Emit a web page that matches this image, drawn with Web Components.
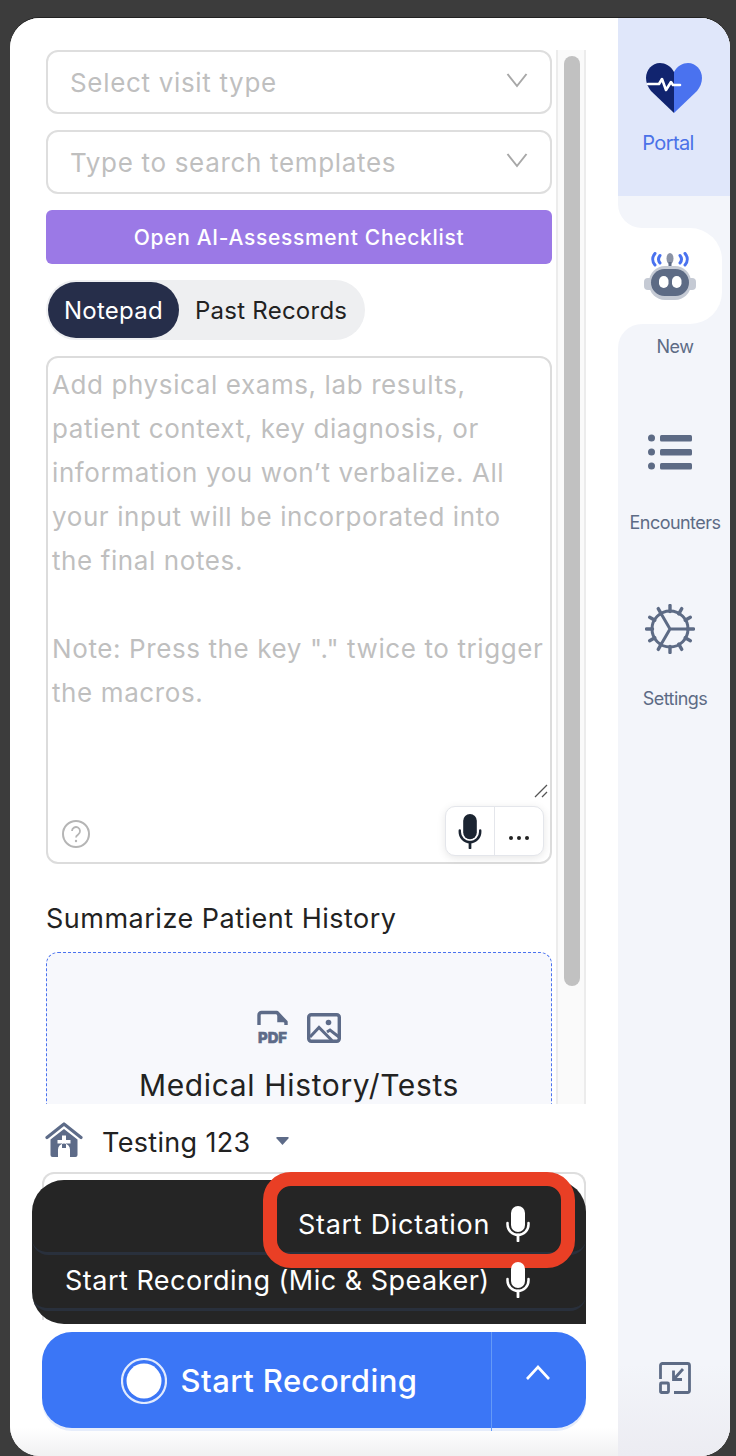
<!doctype html>
<html><head><meta charset="utf-8"><style>
html,body{margin:0;padding:0;background:#3c3c3c;height:100%;overflow:hidden}
body{font-family:Inter,"Liberation Sans",sans-serif}
</style></head><body>
<app-window>
  <main-column></main-column>
  <side-nav slot="side"></side-nav>
</app-window>
<script>
const MIC=(c,w,h)=>`<svg width="${w}" height="${h}" viewBox="0 0 24 36" fill="none"><rect x="5" y="0" width="14" height="26" rx="7" fill="${c}"/><path d="M1.500 17v1.500a10.500 10.500 0 0 0 21 0V17" stroke="${c}" stroke-width="2.500" stroke-linecap="round"/><path d="M12 29v6" stroke="${c}" stroke-width="2.800" stroke-linecap="round"/></svg>`;
const TEETH=Array.from({length:12},(_,i)=>`<path d="M25 1.500v6" transform="rotate(${i*30} 25 25)"/>`).join('');
function def(name,css,html){
  customElements.define(name,class extends HTMLElement{
    constructor(){super();const s=this.attachShadow({mode:'open'});
      const h=typeof html==='function'?html(this):html;
      s.innerHTML=`<style>${css}</style>${h}`;}
  });
}
def('app-window',`
:host{display:flex;position:absolute;left:10px;top:18px;width:720px;height:1438px;background:#fff;border-radius:30px;overflow:hidden;box-sizing:border-box;box-shadow:0 -1px 0 #222}
.m{width:608px;flex:none;display:flex}.s{width:112px;flex:none;display:flex}
::slotted(*){flex:1}
`,`<div class="m"><slot></slot></div><div class="s"><slot name="side"></slot></div>`);

def('main-column',`
:host{display:flex;flex-direction:column;background:linear-gradient(#fff 0,#fff 1410px,#f1f1f2 1438px)}
.top{height:1086px;display:flex;overflow:hidden;flex:none}
.content{width:506px;margin-left:36px;padding-top:32px;display:flex;flex-direction:column;gap:16px;flex:none}
.content>*{flex:none}
x-scrollbar{margin-left:4px;margin-top:32px}
`,`<div class="top"><div class="content">
<x-select label="Select visit type"></x-select>
<x-select label="Type to search templates"></x-select>
<x-cta>Open AI-Assessment Checklist</x-cta>
<x-tabs></x-tabs>
<x-notepad></x-notepad>
<x-upload></x-upload>
</div><x-scrollbar></x-scrollbar></div>
<x-recorder></x-recorder>`);

def('x-scrollbar',`
:host{display:block;width:30px;height:1054px;box-sizing:border-box;background:#fafafa;border-left:2px solid #ececec;border-right:2px solid #ececec;padding:6px 6px 0;flex:none}
div{width:16px;height:930px;background:#c1c1c1;border-radius:8px}
`,`<div></div>`);

def('x-select',`
:host{display:flex;align-items:center;justify-content:space-between;height:64px;box-sizing:border-box;border:2px solid #dedede;border-radius:12px;padding:0 22px 0 22px;color:#bfbfbf;font-size:26px;letter-spacing:.67px}
svg{flex:none;margin-top:-4px}
`,e=>`<span>${e.getAttribute('label')}</span><svg width="22" height="16" viewBox="0 0 22 16" fill="none"><path d="M1.5 2 11 14 20.5 2" stroke="#a8a8a8" stroke-width="2"/></svg>`);

def('x-cta',`
:host{display:flex;align-items:center;justify-content:center;height:54px;background:#9b79e6;border-radius:6px;color:#fff;font-size:21px;font-weight:500;letter-spacing:.69px}
`,`<slot></slot>`);

def('x-tabs',`
:host{display:flex;align-self:flex-start;height:60px;width:319px;box-sizing:border-box;padding:2px;background:#eeeff1;border-radius:30px;font-size:24px;letter-spacing:.25px;align-items:stretch}
.a{width:131px;background:#262e4a;color:#fff;border-radius:28px;display:flex;align-items:center;justify-content:center}
.b{display:flex;align-items:center;padding-left:16px;color:#222}
`,`<div class="a">Notepad</div><div class="b">Past Records</div>`);

def('x-notepad',`
:host{display:block;position:relative;height:508px;box-sizing:border-box;border:2px solid #dcdcdc;border-radius:12px;color:#bfbfbf;font-size:26px;line-height:44px;letter-spacing:.6px;padding:5px 0 0 4px;white-space:nowrap}
.grip{position:absolute;right:2px;bottom:64px}
.help{position:absolute;left:14px;bottom:14px}
.tools{position:absolute;right:6px;bottom:6px;width:99px;height:50px;box-sizing:border-box;background:#fff;border:1px solid #e4e6eb;border-radius:10px;box-shadow:0 2px 8px rgba(0,0,0,.1);display:flex}
.tools div{width:48px;display:flex;align-items:center;justify-content:center}
.tools div+div{border-left:1px solid #e4e6eb;width:49px}
`,`Add physical exams, lab results,<br>patient context, key diagnosis, or<br>information you won’t verbalize. All<br>your input will be incorporated into<br>the final notes.<br><br>Note: Press the key "." twice to trigger<br>the macros.
<svg class="grip" width="14" height="14" viewBox="0 0 14 14" fill="none"><path d="M1 13 13 1M8 13l5-5" stroke="#555" stroke-width="1.300"/></svg>
<svg class="help" width="28" height="28" viewBox="0 0 28 28" fill="none"><circle cx="14" cy="14" r="13" stroke="#b5b5b5" stroke-width="2"/><path d="M10 11a4 4 0 1 1 6.2 3.4c-1.4.9-2.2 1.6-2.2 3.2" stroke="#b5b5b5" stroke-width="1.8"/><circle cx="14" cy="21" r="1.2" fill="#b5b5b5"/></svg>
<div class="tools"><div>${MIC('#1b2431',24,35)}</div><div><svg width="22" height="6" viewBox="0 0 22 6" style="margin-top:14px"><circle cx="3" cy="3" r="2" fill="#222"/><circle cx="11" cy="3" r="2" fill="#222"/><circle cx="19" cy="3" r="2" fill="#222"/></svg></div></div>`);

def('x-upload',`
:host{display:block;padding-top:23px}
h3{margin:0 0 17px;font-weight:400;font-size:27px;line-height:32px;letter-spacing:.5px;color:#222}
.box{height:300px;box-sizing:border-box;border:1px dashed #4a72ef;border-radius:12px;background:#f7f8fc;display:flex;flex-direction:column;align-items:center;padding-top:58px}
.ic{display:flex;gap:18px;align-items:flex-start;height:34px}
.t{font-size:30px;line-height:40px;margin-top:20px;color:#222;letter-spacing:.65px}
text{font-family:Inter,"Liberation Sans",sans-serif;font-weight:800}
svg{overflow:visible}
`,`<h3>Summarize Patient History</h3><div class="box"><div class="ic">
<svg width="32" height="33" viewBox="0 0 32 33" fill="none"><path d="M2 14V4a2.5 2.500 0 0 1 2.500-2.500H20L29 11v3" stroke="#5d6b88" stroke-width="3.400" stroke-linejoin="round"/><path d="M21 4v6.500h6z" fill="#5d6b88" stroke="#5d6b88" stroke-width="1.500"/><text x="15.500" y="32" text-anchor="middle" font-size="15" fill="#5d6b88" stroke="#5d6b88" stroke-width=".7" textLength="29" lengthAdjust="spacingAndGlyphs">PDF</text></svg>
<svg width="34" height="30" viewBox="0 0 34 30" fill="none" style="margin-top:2px"><rect x="1.700" y="1.700" width="30.600" height="26.600" rx="2.500" stroke="#5d6b88" stroke-width="3.400"/><circle cx="21.500" cy="9.500" r="2.800" fill="#5d6b88"/><path d="M3 24 12 14.500l13 13M20 19l3-2 9 7" stroke="#5d6b88" stroke-width="3"/></svg>
</div><div class="t">Medical History/Tests</div></div>`);

def('x-recorder',`
:host{display:block;flex:1;padding:16px 32px 0;position:relative}
.row{display:flex;align-items:center;height:40px;padding-left:3px;color:#222;font-size:27px;letter-spacing:.33px}
.row span{margin-left:19px;position:relative;top:2px}
.caret{margin-left:25px;margin-top:2px}
.card{position:relative;height:148px;margin-top:12px;border:2px solid #dedede;border-bottom:0;border-radius:12px 12px 0 0;box-sizing:border-box}
x-menu{position:absolute;left:-12px;top:6px}
x-bigbutton{margin-top:12px}
`,`<div class="row"><svg width="38" height="36" viewBox="0 0 38 36"><path d="M2 15.500 19 2l17 13.500" fill="none" stroke="#5d6b88" stroke-width="3.200" stroke-linecap="round" stroke-linejoin="round"/><path fill-rule="evenodd" d="M19 7 5.500 17.500V33a2 2 0 0 0 2 2h5.500v-7.500a6 6 0 0 1 12 0V35h5.500a2 2 0 0 0 2-2V17.500z M17 13.500V18h-4.500v3.500H17V26h4v-4.500h4.500V18H21v-4.500z" fill="#5d6b88"/></svg><span>Testing 123</span><svg class="caret" width="13" height="8" viewBox="0 0 13 8"><path d="M1 0h11a.8.8 0 0 1 .6 1.300L6.500 8 .4 1.300A.8.8 0 0 1 1 0z" fill="#5d6b88"/></svg></div>
<div class="card"><x-menu></x-menu></div><x-bigbutton></x-bigbutton>`);

def('x-menu',`
:host{display:block;position:absolute;width:554px;height:144px;background:#252525;border-radius:32px 32px 0 32px;color:#fff;font-size:27px}
.clip{position:absolute;inset:0;overflow:hidden;border-radius:32px 32px 0 32px}
.line{position:absolute;left:0;right:0;height:75px;box-sizing:border-box;border-bottom:3px solid #29303c;border-radius:0 0 16px 16px}
.mic{position:absolute;left:474px}
.hl{position:absolute;left:231px;top:-8px;width:312px;height:96px;box-sizing:border-box;border:14px solid #e93f25;border-radius:28px}
.t{position:absolute;white-space:nowrap;line-height:36px}
`,`<div class="clip"><div class="line" style="top:0"></div><div class="line" style="top:56px"></div></div>
<div class="hl"></div>
<div class="t" style="left:266px;top:27px;letter-spacing:.7px">Start Dictation</div>
<div class="mic" style="top:26px">${MIC('#fff',24,36)}</div>
<div class="t" style="left:33px;top:83px;letter-spacing:.49px">Start Recording (Mic &amp; Speaker)</div>
<div class="mic" style="top:82px">${MIC('#fff',24,36)}</div>`);

def('x-bigbutton',`
:host{display:flex;height:96px;background:#3b76f6;border-radius:30px;color:#fff;box-shadow:0 3px 0 #e6edfb;position:relative}
.l{width:449px;display:flex;align-items:center;justify-content:center;gap:14px;font-size:31px;font-weight:500;letter-spacing:.43px;padding:1px 0 0 5px;box-sizing:border-box}
.d{position:absolute;left:449px;top:0;bottom:-3px;width:1px;background:#659af7}
.c{flex:1;display:flex;justify-content:center;padding:33px 2px 0 0}
.dot{width:46px;height:46px;flex:none;filter:blur(.5px)}
`,`<div class="l"><svg class="dot" viewBox="0 0 46 46"><circle cx="23" cy="23" r="22" fill="none" stroke="#fff" stroke-width="2.200" opacity=".85"/><circle cx="23" cy="23" r="17.500" fill="#fff"/></svg><span>Start Recording</span></div><div class="d"></div>
<div class="c"><svg width="26" height="16" viewBox="0 0 26 16" fill="none"><path d="M2 14 13 2l11 12" stroke="#fff" stroke-width="2.600"/></svg></div>`);

def('side-nav',`
:host{display:flex;flex-direction:column;background:#fff;height:1438px}
.portal{height:178px;background:#e0e7fa;display:flex;flex-direction:column;align-items:center;padding-top:45px;box-sizing:border-box;color:#4a72e8;font-size:20px;letter-spacing:-.6px;flex:none}
.portal span{margin-top:18px;margin-left:-12px}
.gap{height:32px;background:#f3f5fa;border-bottom-left-radius:24px;flex:none}
.newwrap{height:96px;background:linear-gradient(90deg,#fff 50%,#f3f5fa 50%);flex:none}
.new{height:96px;width:104px;background:#fff;border-radius:0 32px 32px 0;display:flex;justify-content:center;padding-top:24px;box-sizing:border-box}
.rest{flex:1;background:linear-gradient(#f3f5fa 0,#f3f5fa 1040px,#ececf2 100%);border-top-left-radius:24px;display:flex;flex-direction:column;align-items:center;position:relative;padding-left:2px}
.lab{font-size:18px;letter-spacing:-.55px;color:#5d6b85;line-height:22px}
.collapse{position:absolute;left:41px;bottom:62px}
`,`<div class="portal"><svg width="56" height="50" viewBox="0 0 56 50"><path d="M28 9C25 3 19 0 14 0 6 0 0 7 0 15c0 5 2 9 5 13l23 22z" fill="#11246f"/><path d="M28 9C31 3 37 0 42 0c8 0 14 7 14 15 0 5-2 9-5 13L28 50z" fill="#4a72ef"/><path d="M2 21h11l3-5 4 11 5-8 2 3h7" fill="none" stroke="#fff" stroke-width="2.600" stroke-linecap="round" stroke-linejoin="round"/></svg><span>Portal</span></div>
<div class="gap"></div>
<div class="newwrap"><div class="new"><svg width="54" height="48" viewBox="0 0 54 48"><path d="M12 1.500c-3 3.500-3 8 0 11.500M17 3.500c-2 2.500-2 5 0 7.500M42 1.500c3 3.500 3 8 0 11.500M37 3.500c2 2.500 2 5 0 7.500" fill="none" stroke="#4a72ef" stroke-width="3" stroke-linecap="round"/><ellipse cx="27" cy="6.500" rx="3.500" ry="5.500" fill="#8b93a5"/><rect x="25.500" y="10" width="3" height="5" fill="#5d6b85"/><rect x="1" y="26" width="52" height="12" rx="4" fill="#c5cad4"/><rect x="6" y="14" width="42" height="34" rx="16" fill="#c5cad4"/><rect x="8" y="17" width="38" height="27" rx="13.500" fill="#5d6b85"/><rect x="16" y="24" width="9.500" height="12" rx="4.700" fill="#fff"/><rect x="29" y="24" width="9.500" height="12" rx="4.700" fill="#fff"/></svg></div></div>
<div class="rest"><div class="lab" style="margin-top:12px">New</div>
<svg style="margin:76px 10px 0 0" width="44" height="36" viewBox="0 0 44 36" fill="#5d6b85"><circle cx="3.500" cy="4" r="3.500"/><circle cx="3.500" cy="18" r="3.500"/><circle cx="3.500" cy="32" r="3.500"/><rect x="12" y="1" width="32" height="6.500" rx="1.500"/><rect x="12" y="15" width="32" height="6.500" rx="1.500"/><rect x="12" y="29" width="32" height="6.500" rx="1.500"/></svg>
<div class="lab" style="margin-top:42px">Encounters</div>
<svg style="margin:70px 10px 0 0" width="50" height="50" viewBox="0 0 50 50" fill="none" stroke="#5d6b85" stroke-width="3"><circle cx="25" cy="25" r="18"/><path d="M25 25h18M25 25l-9-15.500M25 25l-9 15.500"/><g stroke-linecap="round" stroke-width="3.400">${TEETH}</g></svg>
<div class="lab" style="margin-top:34px">Settings</div>
<svg class="collapse" width="32" height="32" viewBox="0 0 32 32" fill="none" stroke="#5d6b85" stroke-width="2.800"><path d="M1.500 17V3.500a2 2 0 0 1 2-2h25a2 2 0 0 1 2 2v25a2 2 0 0 1-2 2H15"/><rect x="1.500" y="21" width="8" height="9.500" rx="1"/><path d="M24 7l-9 10M14.500 8.500v9H23"/></svg>
</div>`);
</script>
</body></html>
